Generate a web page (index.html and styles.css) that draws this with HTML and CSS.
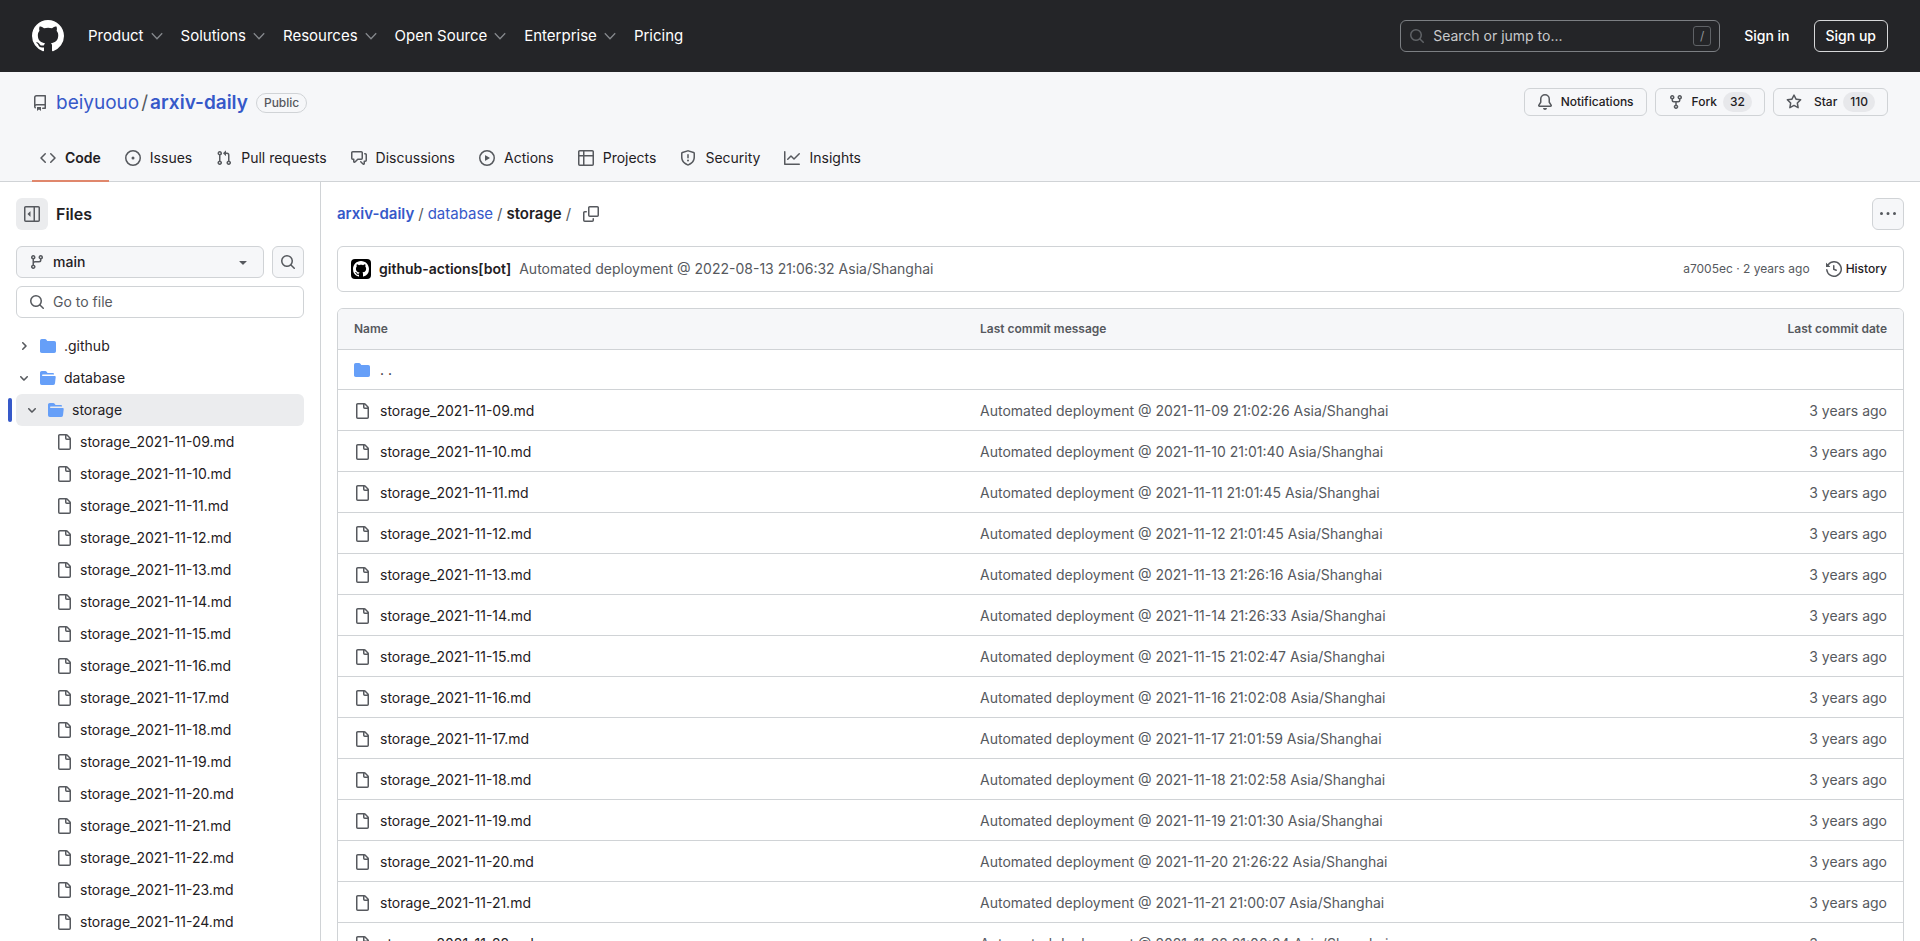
FILE: index.html
```html
<!DOCTYPE html>
<html lang="en">
<head>
<meta charset="utf-8">
<meta name="viewport" content="width=device-width, initial-scale=1">
<title>arxiv-daily/database/storage</title>
<link rel="stylesheet" href="styles.css">
</head>
<body>
<svg class="sprite" aria-hidden="true">
  <symbol id="mark" viewBox="0 0 16 16"><path d="M8 0c4.42 0 8 3.58 8 8a8.013 8.013 0 0 1-5.45 7.59c-.4.08-.55-.17-.55-.38 0-.27.01-1.13.01-2.2 0-.75-.25-1.23-.54-1.48 1.78-.2 3.65-.88 3.65-3.95 0-.88-.31-1.59-.82-2.15.08-.2.36-1.02-.08-2.12 0 0-.67-.22-2.2.82-.64-.18-1.32-.27-2-.27-.68 0-1.36.09-2 .27-1.53-1.03-2.2-.82-2.2-.82-.44 1.1-.16 1.92-.08 2.12-.51.56-.82 1.28-.82 2.15 0 3.06 1.86 3.75 3.64 3.95-.23.2-.44.55-.51 1.07-.46.21-1.61.55-2.33-.66-.15-.24-.6-.83-1.23-.82-.67.01-.27.38.01.53.34.19.73.9.82 1.13.16.45.68 1.31 2.69.94 0 .67.01 1.3.01 1.49 0 .21-.15.45-.55.38A7.995 7.995 0 0 1 0 8c0-4.42 3.58-8 8-8Z"/></symbol>
  <symbol id="chev-nav" viewBox="0 0 16 16"><path d="M2.8 5.2 8 10.8l5.2-5.6" fill="none" stroke="currentColor" stroke-width="1.3"/></symbol>
  <symbol id="search" viewBox="0 0 16 16"><path d="M10.68 11.74a6 6 0 0 1-7.922-8.982 6 6 0 0 1 8.982 7.922l3.04 3.04a.749.749 0 0 1-.326 1.275.749.749 0 0 1-.734-.215ZM11.5 7a4.499 4.499 0 1 0-8.997 0A4.499 4.499 0 0 0 11.5 7Z"/></symbol>
  <symbol id="repo" viewBox="0 0 16 16"><path d="M2 2.5A2.5 2.5 0 0 1 4.5 0h8.75a.75.75 0 0 1 .75.75v12.5a.75.75 0 0 1-.75.75h-2.5a.75.75 0 0 1 0-1.5h1.75v-2h-8a1 1 0 0 0-.714 1.7.75.75 0 1 1-1.072 1.05A2.495 2.495 0 0 1 2 11.5Zm10.5-1h-8a1 1 0 0 0-1 1v6.708A2.486 2.486 0 0 1 4.5 9h8ZM5 12.25a.25.25 0 0 1 .25-.25h3.5a.25.25 0 0 1 .25.25v3.25a.25.25 0 0 1-.4.2l-1.45-1.087a.249.249 0 0 0-.3 0L5.4 15.7a.25.25 0 0 1-.4-.2Z"/></symbol>
  <symbol id="bell" viewBox="0 0 16 16"><path d="M8 16a2 2 0 0 0 1.985-1.75c.017-.137-.097-.25-.235-.25h-3.5c-.138 0-.252.113-.235.25A2 2 0 0 0 8 16ZM3 5a5 5 0 0 1 10 0v2.947c0 .05.015.098.042.139l1.703 2.555A1.519 1.519 0 0 1 13.482 13H2.518a1.516 1.516 0 0 1-1.263-2.36l1.703-2.554A.255.255 0 0 0 3 7.947Zm5-3.5A3.5 3.5 0 0 0 4.5 5v2.947c0 .346-.102.683-.294.97l-1.703 2.556a.017.017 0 0 0-.003.01l.001.006c0 .002.002.004.004.006l.006.004.007.001h10.964l.007-.001.006-.004.004-.006.001-.007a.017.017 0 0 0-.003-.01l-1.703-2.554a1.745 1.745 0 0 1-.294-.97V5A3.5 3.5 0 0 0 8 1.5Z"/></symbol>
  <symbol id="fork" viewBox="0 0 16 16"><path d="M5 5.372v.878c0 .414.336.75.75.75h4.5a.75.75 0 0 0 .75-.75v-.878a2.25 2.25 0 1 1 1.5 0v.878a2.25 2.25 0 0 1-2.25 2.25h-1.5v2.128a2.251 2.251 0 1 1-1.5 0V8.5h-1.5A2.25 2.25 0 0 1 3.5 6.25v-.878a2.25 2.25 0 1 1 1.5 0ZM5 3.25a.75.75 0 1 0-1.5 0 .75.75 0 0 0 1.5 0Zm6.75.75a.75.75 0 1 0 0-1.5.75.75 0 0 0 0 1.5Zm-3 8.75a.75.75 0 1 0-1.5 0 .75.75 0 0 0 1.5 0Z"/></symbol>
  <symbol id="star" viewBox="0 0 16 16"><path d="M8 .25a.75.75 0 0 1 .673.418l1.882 3.815 4.21.612a.75.75 0 0 1 .416 1.279l-3.046 2.97.719 4.192a.751.751 0 0 1-1.088.791L8 12.347l-3.766 1.98a.75.75 0 0 1-1.088-.79l.72-4.194L.818 6.374a.75.75 0 0 1 .416-1.28l4.21-.611L7.327.668A.75.75 0 0 1 8 .25Zm0 2.445L6.615 5.5a.75.75 0 0 1-.564.41l-3.097.45 2.24 2.184a.75.75 0 0 1 .216.664l-.528 3.084 2.769-1.456a.75.75 0 0 1 .698 0l2.77 1.456-.53-3.084a.75.75 0 0 1 .216-.664l2.24-2.183-3.096-.45a.75.75 0 0 1-.564-.41L8 2.694Z"/></symbol>
  <symbol id="code" viewBox="0 0 16 16"><path d="m11.28 3.22 4.25 4.25a.75.75 0 0 1 0 1.06l-4.25 4.25a.749.749 0 0 1-1.06-1.06L13.94 8l-3.72-3.72a.749.749 0 0 1 1.06-1.06Zm-6.56 0a.751.751 0 0 1 1.06 1.06L2.06 8l3.72 3.72a.749.749 0 1 1-1.06 1.06L.47 8.53a.75.75 0 0 1 0-1.06Z"/></symbol>
  <symbol id="issue" viewBox="0 0 16 16"><path d="M8 9.5a1.5 1.5 0 1 0 0-3 1.5 1.5 0 0 0 0 3Z"/><path d="M8 0a8 8 0 1 1 0 16A8 8 0 0 1 8 0ZM1.5 8a6.5 6.5 0 1 0 13 0 6.5 6.5 0 0 0-13 0Z"/></symbol>
  <symbol id="pull" viewBox="0 0 16 16"><path d="M1.5 3.25a2.25 2.25 0 1 1 3 2.122v5.256a2.251 2.251 0 1 1-1.5 0V5.372A2.25 2.25 0 0 1 1.5 3.25Zm5.677-.177L9.573.677A.25.25 0 0 1 10 .854V2.5h1A2.5 2.5 0 0 1 13.5 5v5.628a2.251 2.251 0 1 1-1.5 0V5a1 1 0 0 0-1-1h-1v1.646a.25.25 0 0 1-.427.177L7.177 3.427a.25.25 0 0 1 0-.354ZM3.75 2.5a.75.75 0 1 0 0 1.5.75.75 0 0 0 0-1.5Zm0 9.5a.75.75 0 1 0 0 1.5.75.75 0 0 0 0-1.5Zm8.25.75a.75.75 0 1 0 1.5 0 .75.75 0 0 0-1.5 0Z"/></symbol>
  <symbol id="discuss" viewBox="0 0 16 16"><path d="M1.75 1h8.5c.966 0 1.75.784 1.75 1.75v5.5A1.75 1.75 0 0 1 10.25 10H7.061l-2.574 2.573A1.458 1.458 0 0 1 2 11.543V10h-.25A1.75 1.75 0 0 1 0 8.25v-5.5C0 1.784.784 1 1.75 1ZM1.5 2.75v5.5c0 .138.112.25.25.25h1a.75.75 0 0 1 .75.75v2.19l2.72-2.72a.749.749 0 0 1 .53-.22h3.5a.25.25 0 0 0 .25-.25v-5.5a.25.25 0 0 0-.25-.25h-8.5a.25.25 0 0 0-.25.25Zm13 2a.25.25 0 0 0-.25-.25h-.5a.75.75 0 0 1 0-1.5h.5c.966 0 1.75.784 1.75 1.75v5.5A1.75 1.75 0 0 1 14.25 12H14v1.543a1.458 1.458 0 0 1-2.487 1.03L9.22 12.28a.749.749 0 0 1 1.06-1.06l2.22 2.22v-2.19a.75.75 0 0 1 .75-.75h1a.25.25 0 0 0 .25-.25Z"/></symbol>
  <symbol id="play" viewBox="0 0 16 16"><path d="M8 0a8 8 0 1 1 0 16A8 8 0 0 1 8 0ZM1.5 8a6.5 6.5 0 1 0 13 0 6.5 6.5 0 0 0-13 0Zm4.879-2.773 4.264 2.559a.25.25 0 0 1 0 .428l-4.264 2.559A.25.25 0 0 1 6 10.559V5.442a.25.25 0 0 1 .379-.215Z"/></symbol>
  <symbol id="grid" viewBox="0 0 16 16"><path d="M0 1.75C0 .784.784 0 1.75 0h12.5C15.216 0 16 .784 16 1.75v12.5A1.75 1.75 0 0 1 14.25 16H1.75A1.75 1.75 0 0 1 0 14.25ZM6.5 6.5v8h7.75a.25.25 0 0 0 .25-.25V6.5Zm8-1.5V1.75a.25.25 0 0 0-.25-.25H6.5V5Zm-13 1.5v7.75c0 .138.112.25.25.25H5v-8ZM5 5V1.5H1.75a.25.25 0 0 0-.25.25V5Z"/></symbol>
  <symbol id="shield" viewBox="0 0 16 16"><path d="M7.467.133a1.748 1.748 0 0 1 1.066 0l5.25 1.68A1.75 1.75 0 0 1 15 3.48V7c0 1.566-.32 3.182-1.303 4.682-.983 1.498-2.585 2.813-5.032 3.855a1.697 1.697 0 0 1-1.33 0c-2.447-1.042-4.049-2.357-5.032-3.855C1.32 10.182 1 8.566 1 7V3.48a1.75 1.75 0 0 1 1.217-1.667Zm.61 1.429a.25.25 0 0 0-.153 0l-5.25 1.68a.25.25 0 0 0-.174.238V7c0 1.358.275 2.666 1.057 3.86.784 1.194 2.121 2.34 4.366 3.297a.196.196 0 0 0 .154 0c2.245-.956 3.582-2.104 4.366-3.298C13.225 9.666 13.5 8.36 13.5 7V3.48a.251.251 0 0 0-.174-.237l-5.25-1.68ZM8.75 4.75v3a.75.75 0 0 1-1.5 0v-3a.75.75 0 0 1 1.5 0ZM9 10.5a1 1 0 1 1-2 0 1 1 0 0 1 2 0Z"/></symbol>
  <symbol id="graph" viewBox="0 0 16 16"><path d="M1.5 1.75V13.5h13.75a.75.75 0 0 1 0 1.5H.75a.75.75 0 0 1-.75-.75V1.75a.75.75 0 0 1 1.5 0Zm14.28 2.53-5.25 5.25a.75.75 0 0 1-1.06 0L7 7.06 4.28 9.78a.751.751 0 0 1-1.06-1.06l3.25-3.25a.75.75 0 0 1 1.06 0L10 7.94l4.72-4.72a.751.751 0 0 1 1.06 1.06Z"/></symbol>
  <symbol id="sidebar" viewBox="0 0 16 16"><path d="M6.823 7.823a.25.25 0 0 1 0 .354l-2.396 2.396A.25.25 0 0 1 4 10.396V5.604a.25.25 0 0 1 .427-.177Z" transform="matrix(-1 0 0 1 10.5 0)"/><path d="M1.75 0h12.5C15.216 0 16 .784 16 1.75v12.5A1.75 1.75 0 0 1 14.25 16H1.75A1.75 1.75 0 0 1 0 14.25V1.75C0 .784.784 0 1.75 0ZM1.5 1.75v12.5c0 .138.112.25.25.25H9.5v-13H1.75a.25.25 0 0 0-.25.25ZM11 14.5h3.25a.25.25 0 0 0 .25-.25V1.75a.25.25 0 0 0-.25-.25H11Z"/></symbol>
  <symbol id="branch" viewBox="0 0 16 16"><path d="M9.5 3.25a2.25 2.25 0 1 1 3 2.122V6A2.5 2.5 0 0 1 10 8.5H6a1 1 0 0 0-1 1v1.128a2.251 2.251 0 1 1-1.5 0V5.372a2.25 2.25 0 1 1 1.5 0v1.836A2.493 2.493 0 0 1 6 7h4a1 1 0 0 0 1-1v-.628A2.25 2.25 0 0 1 9.5 3.25Zm-6 0a.75.75 0 1 0 1.5 0 .75.75 0 0 0-1.5 0Zm8.25-.75a.75.75 0 1 0 0 1.5.75.75 0 0 0 0-1.5ZM4.25 12a.75.75 0 1 0 0 1.5.75.75 0 0 0 0-1.5Z"/></symbol>
  <symbol id="caret" viewBox="0 0 16 16"><path d="m4.427 7.427 3.396 3.396a.25.25 0 0 0 .354 0l3.396-3.396A.25.25 0 0 0 11.396 7H4.604a.25.25 0 0 0-.177.427Z"/></symbol>
  <symbol id="chev-r12" viewBox="0 0 12 12"><path d="M4.7 10c-.2 0-.4-.1-.5-.2-.3-.3-.3-.8 0-1.1L6.9 6 4.2 3.3c-.3-.3-.3-.8 0-1.1.3-.3.8-.3 1.1 0l3.3 3.2c.3.3.3.8 0 1.1L5.3 9.7c-.2.2-.4.3-.6.3Z"/></symbol>
  <symbol id="chev-d12" viewBox="0 0 12 12"><path d="M6 8.825c-.2 0-.4-.1-.5-.2l-3.3-3.3c-.3-.3-.3-.8 0-1.1.3-.3.8-.3 1.1 0l2.7 2.7 2.7-2.7c.3-.3.8-.3 1.1 0 .3.3.3.8 0 1.1l-3.2 3.2c-.2.2-.4.3-.6.3Z"/></symbol>
  <symbol id="folder" viewBox="0 0 16 16"><path d="M1.75 1A1.75 1.75 0 0 0 0 2.75v10.5C0 14.216.784 15 1.75 15h12.5A1.75 1.75 0 0 0 16 13.25v-8.5A1.75 1.75 0 0 0 14.25 3H7.5a.25.25 0 0 1-.2-.1l-.9-1.2C6.07 1.26 5.55 1 5 1H1.75Z"/></symbol>
  <symbol id="folder-open" viewBox="0 0 16 16"><path d="M.513 1.513A1.75 1.75 0 0 1 1.75 1h3.5c.55 0 1.07.26 1.4.7l.9 1.2a.25.25 0 0 0 .2.1H13a1 1 0 0 1 1 1v.5H2.75a.75.75 0 0 0 0 1.5h11.978a1 1 0 0 1 .994 1.117L15 13.25A1.75 1.75 0 0 1 13.25 15H1.75A1.75 1.75 0 0 1 0 13.25V2.75c0-.464.184-.91.513-1.237Z"/></symbol>
  <symbol id="file" viewBox="0 0 16 16"><path d="M2 1.75C2 .784 2.784 0 3.75 0h6.586c.464 0 .909.184 1.237.513l2.914 2.914c.329.328.513.773.513 1.237v9.586A1.75 1.75 0 0 1 13.25 16h-9.5A1.75 1.75 0 0 1 2 14.25Zm1.75-.25a.25.25 0 0 0-.25.25v12.5c0 .138.112.25.25.25h9.5a.25.25 0 0 0 .25-.25V6h-2.75A1.75 1.75 0 0 1 9 4.25V1.5Zm6.75.062V4.25c0 .138.112.25.25.25h2.688l-.011-.013-2.914-2.914-.013-.011Z"/></symbol>
  <symbol id="copy" viewBox="0 0 16 16"><path d="M0 6.75C0 5.784.784 5 1.75 5h1.5a.75.75 0 0 1 0 1.5h-1.5a.25.25 0 0 0-.25.25v7.5c0 .138.112.25.25.25h7.5a.25.25 0 0 0 .25-.25v-1.5a.75.75 0 0 1 1.5 0v1.5A1.75 1.75 0 0 1 9.25 16h-7.5A1.75 1.75 0 0 1 0 14.25Z"/><path d="M5 1.75C5 .784 5.784 0 6.75 0h7.5C15.216 0 16 .784 16 1.75v7.5A1.75 1.75 0 0 1 14.25 11h-7.5A1.75 1.75 0 0 1 5 9.25Zm1.75-.25a.25.25 0 0 0-.25.25v7.5c0 .138.112.25.25.25h7.5a.25.25 0 0 0 .25-.25v-7.5a.25.25 0 0 0-.25-.25Z"/></symbol>
  <symbol id="dots" viewBox="0 0 16 16"><path d="M8 9a1.5 1.5 0 1 0 0-3 1.5 1.5 0 0 0 0 3ZM1.5 9a1.5 1.5 0 1 0 0-3 1.5 1.5 0 0 0 0 3Zm13 0a1.5 1.5 0 1 0 0-3 1.5 1.5 0 0 0 0 3Z"/></symbol>
  <symbol id="history" viewBox="0 0 16 16"><path d="m.427 1.927 1.215 1.215a8.002 8.002 0 1 1-1.6 5.685.75.75 0 1 1 1.493-.154 6.5 6.5 0 1 0 1.18-4.458l1.358 1.358A.25.25 0 0 1 3.896 6H.25A.25.25 0 0 1 0 5.75V2.104a.25.25 0 0 1 .427-.177ZM7.75 4a.75.75 0 0 1 .75.75v2.992l2.028.812a.75.75 0 0 1-.557 1.392l-2.5-1A.751.751 0 0 1 7 8.25v-3.5A.75.75 0 0 1 7.75 4Z"/></symbol>
</svg>

<header class="topbar">
  <a class="logo" href="#" aria-label="Homepage"><svg class="logo-mark"><use href="#mark"/></svg></a>
  <nav class="topnav" aria-label="Global">
    <button class="topnav-item" type="button">Product<svg class="icon"><use href="#chev-nav"/></svg></button>
    <button class="topnav-item" type="button">Solutions<svg class="icon"><use href="#chev-nav"/></svg></button>
    <button class="topnav-item" type="button">Resources<svg class="icon"><use href="#chev-nav"/></svg></button>
    <button class="topnav-item" type="button">Open Source<svg class="icon"><use href="#chev-nav"/></svg></button>
    <button class="topnav-item" type="button">Enterprise<svg class="icon"><use href="#chev-nav"/></svg></button>
    <a class="topnav-item" href="#">Pricing</a>
  </nav>
  <button class="jump" type="button"><svg class="icon"><use href="#search"/></svg><span class="jump-text">Search or jump to...</span><kbd class="key">/</kbd></button>
  <a class="sign-in" href="#">Sign in</a>
  <a class="sign-up" href="#">Sign up</a>
</header>

<section class="repo-head">
  <div class="repo-row">
    <div class="repo-title">
      <svg class="icon"><use href="#repo"/></svg>
      <a href="#">beiyuouo</a><span class="slash">/</span><a class="strong" href="#">arxiv-daily</a>
      <span class="pill">Public</span>
    </div>
    <div class="repo-actions">
      <a class="btn-sm" href="#"><svg class="icon"><use href="#bell"/></svg>Notifications</a>
      <a class="btn-sm" href="#"><svg class="icon"><use href="#fork"/></svg>Fork<span class="count">32</span></a>
      <a class="btn-sm" href="#"><svg class="icon icon-star"><use href="#star"/></svg>Star<span class="count">110</span></a>
    </div>
  </div>
  <nav class="tabs" aria-label="Repository">
    <a class="tab tab-current" href="#" aria-current="page"><svg class="icon"><use href="#code"/></svg>Code</a>
    <a class="tab" href="#"><svg class="icon"><use href="#issue"/></svg>Issues</a>
    <a class="tab" href="#"><svg class="icon"><use href="#pull"/></svg>Pull requests</a>
    <a class="tab" href="#"><svg class="icon"><use href="#discuss"/></svg>Discussions</a>
    <a class="tab" href="#"><svg class="icon"><use href="#play"/></svg>Actions</a>
    <a class="tab" href="#"><svg class="icon"><use href="#grid"/></svg>Projects</a>
    <a class="tab" href="#"><svg class="icon"><use href="#shield"/></svg>Security</a>
    <a class="tab" href="#"><svg class="icon"><use href="#graph"/></svg>Insights</a>
  </nav>
</section>

<div class="layout">
  <aside class="sidebar">
    <div class="side-head">
      <button class="square square-flat" type="button" aria-label="Collapse file tree"><svg class="icon"><use href="#sidebar"/></svg></button>
      <h2 class="side-title">Files</h2>
    </div>
    <div class="side-tools">
      <button class="branch" type="button"><svg class="icon"><use href="#branch"/></svg><span class="branch-name">main</span><svg class="icon"><use href="#caret"/></svg></button>
      <button class="square" type="button" aria-label="Search this repository"><svg class="icon"><use href="#search"/></svg></button>
    </div>
    <label class="filter"><svg class="icon"><use href="#search"/></svg><input class="filter-input" type="text" placeholder="Go to file" aria-label="Go to file"></label>
    <ul class="tree">
      <li><a class="node" href="#"><svg class="icon-12"><use href="#chev-r12"/></svg><svg class="icon blue"><use href="#folder"/></svg>.github</a></li>
      <li><a class="node" href="#"><svg class="icon-12"><use href="#chev-d12"/></svg><svg class="icon blue"><use href="#folder-open"/></svg>database</a></li>
      <li><a class="node node-level2 node-current" href="#"><svg class="icon-12"><use href="#chev-d12"/></svg><svg class="icon blue"><use href="#folder-open"/></svg>storage</a></li>
      <li><a class="node node-file" href="#"><svg class="icon"><use href="#file"/></svg>storage_2021-11-09.md</a></li>
      <li><a class="node node-file" href="#"><svg class="icon"><use href="#file"/></svg>storage_2021-11-10.md</a></li>
      <li><a class="node node-file" href="#"><svg class="icon"><use href="#file"/></svg>storage_2021-11-11.md</a></li>
      <li><a class="node node-file" href="#"><svg class="icon"><use href="#file"/></svg>storage_2021-11-12.md</a></li>
      <li><a class="node node-file" href="#"><svg class="icon"><use href="#file"/></svg>storage_2021-11-13.md</a></li>
      <li><a class="node node-file" href="#"><svg class="icon"><use href="#file"/></svg>storage_2021-11-14.md</a></li>
      <li><a class="node node-file" href="#"><svg class="icon"><use href="#file"/></svg>storage_2021-11-15.md</a></li>
      <li><a class="node node-file" href="#"><svg class="icon"><use href="#file"/></svg>storage_2021-11-16.md</a></li>
      <li><a class="node node-file" href="#"><svg class="icon"><use href="#file"/></svg>storage_2021-11-17.md</a></li>
      <li><a class="node node-file" href="#"><svg class="icon"><use href="#file"/></svg>storage_2021-11-18.md</a></li>
      <li><a class="node node-file" href="#"><svg class="icon"><use href="#file"/></svg>storage_2021-11-19.md</a></li>
      <li><a class="node node-file" href="#"><svg class="icon"><use href="#file"/></svg>storage_2021-11-20.md</a></li>
      <li><a class="node node-file" href="#"><svg class="icon"><use href="#file"/></svg>storage_2021-11-21.md</a></li>
      <li><a class="node node-file" href="#"><svg class="icon"><use href="#file"/></svg>storage_2021-11-22.md</a></li>
      <li><a class="node node-file" href="#"><svg class="icon"><use href="#file"/></svg>storage_2021-11-23.md</a></li>
      <li><a class="node node-file" href="#"><svg class="icon"><use href="#file"/></svg>storage_2021-11-24.md</a></li>
    </ul>
  </aside>

  <main class="content">
    <div class="path-row">
      <nav class="crumbs" aria-label="Breadcrumbs">
        <a class="strong" href="#">arxiv-daily</a><span class="slash">/</span><a href="#">database</a><span class="slash">/</span><span class="here">storage</span><span class="slash">/</span>
        <button class="copy" type="button" aria-label="Copy path"><svg class="icon"><use href="#copy"/></svg></button>
      </nav>
      <button class="square" type="button" aria-label="More options"><svg class="icon"><use href="#dots"/></svg></button>
    </div>
    <div class="commit">
      <span class="avatar"><svg class="avatar-mark"><use href="#mark"/></svg></span>
      <a class="author" href="#">github-actions[bot]</a>
      <a class="message" href="#">Automated deployment @ 2022-08-13 21:06:32 Asia/Shanghai</a>
      <span class="stamp">a7005ec · 2 years ago</span>
      <a class="history" href="#"><svg class="icon"><use href="#history"/></svg>History</a>
    </div>
    <div class="listing">
      <table class="files">
        <thead><tr><th class="col-name">Name</th><th class="col-message">Last commit message</th><th class="col-date">Last commit date</th></tr></thead>
        <tbody>
          <tr class="parent"><td colspan="3"><a class="entry" href="#" aria-label="Parent directory"><svg class="icon blue"><use href="#folder"/></svg><span class="up"><span>.</span><span>.</span></span></a></td></tr>
          <tr><td><a class="entry" href="#"><svg class="icon"><use href="#file"/></svg>storage_2021-11-09.md</a></td><td>Automated deployment @ 2021-11-09 21:02:26 Asia/Shanghai</td><td class="col-date">3 years ago</td></tr>
          <tr><td><a class="entry" href="#"><svg class="icon"><use href="#file"/></svg>storage_2021-11-10.md</a></td><td>Automated deployment @ 2021-11-10 21:01:40 Asia/Shanghai</td><td class="col-date">3 years ago</td></tr>
          <tr><td><a class="entry" href="#"><svg class="icon"><use href="#file"/></svg>storage_2021-11-11.md</a></td><td>Automated deployment @ 2021-11-11 21:01:45 Asia/Shanghai</td><td class="col-date">3 years ago</td></tr>
          <tr><td><a class="entry" href="#"><svg class="icon"><use href="#file"/></svg>storage_2021-11-12.md</a></td><td>Automated deployment @ 2021-11-12 21:01:45 Asia/Shanghai</td><td class="col-date">3 years ago</td></tr>
          <tr><td><a class="entry" href="#"><svg class="icon"><use href="#file"/></svg>storage_2021-11-13.md</a></td><td>Automated deployment @ 2021-11-13 21:26:16 Asia/Shanghai</td><td class="col-date">3 years ago</td></tr>
          <tr><td><a class="entry" href="#"><svg class="icon"><use href="#file"/></svg>storage_2021-11-14.md</a></td><td>Automated deployment @ 2021-11-14 21:26:33 Asia/Shanghai</td><td class="col-date">3 years ago</td></tr>
          <tr><td><a class="entry" href="#"><svg class="icon"><use href="#file"/></svg>storage_2021-11-15.md</a></td><td>Automated deployment @ 2021-11-15 21:02:47 Asia/Shanghai</td><td class="col-date">3 years ago</td></tr>
          <tr><td><a class="entry" href="#"><svg class="icon"><use href="#file"/></svg>storage_2021-11-16.md</a></td><td>Automated deployment @ 2021-11-16 21:02:08 Asia/Shanghai</td><td class="col-date">3 years ago</td></tr>
          <tr><td><a class="entry" href="#"><svg class="icon"><use href="#file"/></svg>storage_2021-11-17.md</a></td><td>Automated deployment @ 2021-11-17 21:01:59 Asia/Shanghai</td><td class="col-date">3 years ago</td></tr>
          <tr><td><a class="entry" href="#"><svg class="icon"><use href="#file"/></svg>storage_2021-11-18.md</a></td><td>Automated deployment @ 2021-11-18 21:02:58 Asia/Shanghai</td><td class="col-date">3 years ago</td></tr>
          <tr><td><a class="entry" href="#"><svg class="icon"><use href="#file"/></svg>storage_2021-11-19.md</a></td><td>Automated deployment @ 2021-11-19 21:01:30 Asia/Shanghai</td><td class="col-date">3 years ago</td></tr>
          <tr><td><a class="entry" href="#"><svg class="icon"><use href="#file"/></svg>storage_2021-11-20.md</a></td><td>Automated deployment @ 2021-11-20 21:26:22 Asia/Shanghai</td><td class="col-date">3 years ago</td></tr>
          <tr><td><a class="entry" href="#"><svg class="icon"><use href="#file"/></svg>storage_2021-11-21.md</a></td><td>Automated deployment @ 2021-11-21 21:00:07 Asia/Shanghai</td><td class="col-date">3 years ago</td></tr>
          <tr><td><a class="entry" href="#"><svg class="icon"><use href="#file"/></svg>storage_2021-11-22.md</a></td><td>Automated deployment @ 2021-11-22 21:00:04 Asia/Shanghai</td><td class="col-date">3 years ago</td></tr>
        </tbody>
      </table>
    </div>
  </main>
</div>
</body>
</html>
```
FILE: styles.css
```css
:root {
  --ink: #1f2023;
  --muted: #56595e;
  --link: #3659c9;
  --line: #d0d3d6;
  --soft: #f6f7f9;
  --hover: #ebecee;
  --folder: #669ff8;
}

* { box-sizing: border-box; }

body {
  margin: 0;
  height: 100vh;
  overflow: hidden;
  display: flex;
  flex-direction: column;
  background: #fff;
  color: var(--ink);
  font: 14px/20px Inter, "Liberation Sans", sans-serif;
}

a { color: inherit; text-decoration: none; }
button, input { font: inherit; color: inherit; margin: 0; }
button { cursor: pointer; }
ul { list-style: none; margin: 0; padding: 0; }

.sprite { display: none; }
.icon { width: 16px; height: 16px; flex: none; fill: currentColor; color: var(--muted); }
.icon-12 { width: 12px; height: 12px; flex: none; fill: var(--muted); }
.blue { color: var(--folder); }

/* Global header */
.topbar {
  flex: none;
  display: flex;
  align-items: center;
  height: 72px;
  padding: 0 32px;
  background: #242528;
  color: #fff;
}
.logo { display: flex; margin-right: 24px; }
.logo-mark { width: 32px; height: 32px; fill: #fff; }
.topnav { display: flex; gap: 16px; margin-right: auto; }
.topnav-item {
  display: flex;
  align-items: center;
  gap: 5px;
  padding: 0;
  border: 0;
  background: none;
  font-size: 15px;
  line-height: 24px;
  white-space: nowrap;
}
.topnav-item .icon { color: #85888c; }
.jump {
  display: flex;
  align-items: center;
  gap: 8px;
  width: 320px;
  height: 32px;
  padding: 0 8px;
  border: 1px solid #7c7f83;
  border-radius: 6px;
  background: none;
  color: #c9cacc;
  text-align: left;
}
.jump .icon { color: #5f6266; }
.jump-text { flex: 1; }
.key {
  width: 18px;
  height: 20px;
  border: 1px solid #5f6266;
  border-radius: 3px;
  color: #909397;
  font: 12px/18px Inter, sans-serif;
  text-align: center;
}
.sign-in { margin: 0 24px; font-weight: 500; }
.sign-up {
  padding: 5px 11px;
  border: 1px solid #d6d7d9;
  border-radius: 6px;
  font-weight: 500;
}

/* Repository header */
.repo-head { flex: none; background: var(--soft); border-bottom: 1px solid var(--line); }
.repo-row {
  display: flex;
  justify-content: space-between;
  padding: 16px 32px;
}
.repo-title {
  display: flex;
  align-items: center;
  height: 30px;
  font-size: 19px;
  line-height: 30px;
  color: var(--link);
}
.repo-title .icon { margin-right: 8px; }
.slash { margin: 0 4px; color: var(--muted); }
.repo-title .slash { margin: 0 2px; }
.strong { font-weight: 600; }
.pill {
  margin-left: 8px;
  padding: 0 7px;
  border: 1px solid var(--line);
  border-radius: 10px;
  color: var(--muted);
  font-size: 12px;
  line-height: 18px;
  font-weight: 500;
}
.repo-actions { display: flex; gap: 8px; }
.btn-sm {
  display: flex;
  align-items: center;
  gap: 6px;
  height: 28px;
  padding: 0 12px;
  border: 1px solid var(--line);
  border-radius: 6px;
  font-size: 12px;
  font-weight: 500;
}
.btn-sm .icon { margin-right: 2px; }
.btn-sm .icon-star { margin-right: 6px; }
.count {
  padding: 0 7px;
  border-radius: 10px;
  background: #e7e8eb;
  line-height: 20px;
}
.tabs { display: flex; gap: 8px; padding: 0 32px; margin: 8px 0 -1px; }
.tab {
  display: flex;
  align-items: center;
  gap: 9px;
  height: 40px;
  padding: 2px 8px 8px;
  border-bottom: 2px solid transparent;
  white-space: nowrap;
}
.tab-current { border-color: #e0876c; font-weight: 600; }

/* Two-pane layout */
.layout { flex: 1; min-height: 0; display: flex; }
.sidebar {
  flex: none;
  width: 321px;
  padding: 16px;
  border-right: 1px solid var(--line);
  overflow: hidden;
}
.side-head { display: flex; align-items: center; gap: 8px; margin-bottom: 16px; }
.side-title { margin: 0; font-size: 16px; line-height: 24px; font-weight: 600; }
.square {
  flex: none;
  display: grid;
  place-items: center;
  width: 32px;
  height: 32px;
  padding: 0;
  border: 1px solid var(--line);
  border-radius: 6px;
  background: var(--soft);
}
.square-flat { border-color: transparent; background: var(--hover); }
.side-tools { display: flex; gap: 8px; margin-bottom: 8px; }
.branch {
  flex: 1;
  display: flex;
  align-items: center;
  gap: 8px;
  height: 32px;
  padding: 0 12px;
  border: 1px solid var(--line);
  border-radius: 6px;
  background: var(--soft);
  font-weight: 500;
}
.branch-name { flex: 1; text-align: left; }
.filter {
  display: flex;
  align-items: center;
  gap: 8px;
  height: 32px;
  padding: 0 12px;
  border: 1px solid var(--line);
  border-radius: 6px;
}
.filter-input { flex: 1; min-width: 0; padding: 0; border: 0; outline: 0; background: none; }
.filter-input::placeholder { color: var(--muted); opacity: 1; }
.tree { margin-top: 12px; }
.node {
  position: relative;
  display: flex;
  align-items: center;
  gap: 8px;
  height: 32px;
  padding-left: 2px;
  border-radius: 6px;
  white-space: nowrap;
}
.node .icon-12 { margin-right: 2px; }
.node-level2 { padding-left: 10px; }
.node-file { padding-left: 40px; }
.node-current { background: var(--hover); }
.node-current::before {
  content: "";
  position: absolute;
  left: -8px;
  top: 4px;
  width: 4px;
  height: 24px;
  border-radius: 2px;
  background: var(--link);
}

.content { flex: 1; min-width: 0; padding: 16px; overflow: hidden; }
.path-row { display: flex; justify-content: space-between; align-items: center; margin-bottom: 16px; }
.crumbs { display: flex; align-items: center; font-size: 15px; line-height: 24px; color: var(--link); }
.here { color: var(--ink); font-weight: 600; }
.copy { display: flex; margin-left: 8px; padding: 0; border: 0; background: none; }
.commit {
  display: flex;
  align-items: center;
  gap: 8px;
  height: 46px;
  padding: 0 16px 0 13px;
  margin-bottom: 16px;
  border: 1px solid var(--line);
  border-radius: 6px;
  white-space: nowrap;
}
.avatar { display: grid; place-items: center; width: 20px; height: 20px; border-radius: 4px; background: #000; }
.avatar-mark { width: 16px; height: 16px; fill: #fff; }
.author { font-weight: 600; }
.message { flex: 1; color: var(--muted); }
.stamp { color: var(--muted); font-size: 12px; }
.history { display: flex; align-items: center; gap: 4px; margin-left: 8px; font-size: 12px; font-weight: 500; }
.listing { border: 1px solid var(--line); border-radius: 6px; overflow: hidden; }
.files { width: 100%; border-collapse: separate; border-spacing: 0; table-layout: fixed; }
.files th {
  height: 40px;
  padding: 0 16px;
  background: var(--soft);
  color: var(--muted);
  font-size: 12px;
  font-weight: 600;
  text-align: left;
}
.files td {
  height: 41px;
  padding: 2px 16px 0;
  border-top: 1px solid var(--line);
  color: var(--muted);
  white-space: nowrap;
}
.files .parent td { height: 40px; padding-top: 0; }
.col-name, .col-message { width: 40%; }
.files .col-date { text-align: right; }
.entry { display: flex; align-items: center; gap: 10px; color: var(--ink); }
.up { display: flex; gap: 4px; }
```
